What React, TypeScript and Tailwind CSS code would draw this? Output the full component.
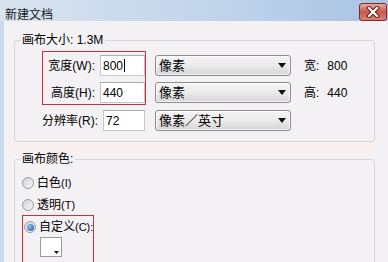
import React from "react";

const Combo = ({ text }: { text: string }) => (
  <div className="w-[136px] h-[21px] flex items-center justify-between rounded-[3px] border border-[#8c8c8c] bg-gradient-to-b from-[#f4f4f4] via-[#ebebeb] to-[#d4d4d4] pl-[3px] pr-[4px] shadow-[inset_0_0_0_1px_rgba(255,255,255,0.7)]">
    <span className="text-[13px] leading-[14px]">{text}</span>
    <svg width="8" height="5" viewBox="0 0 8 5">
      <path d="M0 0 L8 0 L4 5 Z" fill="#111" />
    </svg>
  </div>
);

const Field = ({ value, caret }: { value: string; caret?: boolean }) => (
  <div className="w-[45px] h-[21px] flex items-center bg-white border border-[#c3c6cb] border-t-[#a9acb1] pl-[2px] text-[12px]">
    <span>{value}</span>
    {caret && <span className="w-px h-[13px] bg-black ml-px" />}
  </div>
);

const Radio = ({ checked }: { checked?: boolean }) => (
  <div className="w-[12px] h-[12px] rounded-full border border-[#9a9c9e] bg-gradient-to-br from-[#cfd1d3] to-[#fafafa] flex items-center justify-center shrink-0">
    {checked && (
      <div className="w-[7px] h-[7px] rounded-full bg-[radial-gradient(circle_at_35%_35%,#8fc4f2,#1d4f93)]" />
    )}
  </div>
);

export default function App() {
  return (
    <div className="w-[388px] h-[262px] overflow-hidden flex flex-col bg-[#f4f1f4] text-black font-['Liberation_Sans','Noto_Sans_CJK_SC',sans-serif] text-[12px]">
      <div className="h-[2px] bg-[#1c1c1c]" />
      <div className="h-[24px] flex items-start justify-between pl-[5px] pr-[1px] bg-gradient-to-r from-[#d8e3ef] via-[#c4d6eb] to-[#a9c3e4]">
        <span className="mt-[9px] leading-[12px] text-[12px] text-[#1a1a1a]">新建文档</span>
        <div className="mt-[3px] w-[28px] h-[18px] rounded-[3px] border border-[#7d2b24] bg-gradient-to-b from-[#eaa99f] via-[#c9574a] to-[#d98577] flex items-center justify-center">
          <svg width="14" height="12" viewBox="0 0 14 12">
            <path d="M3 2 L11 10 M11 2 L3 10" stroke="#5e1d17" strokeWidth="4.2" strokeLinecap="square" />
            <path d="M3 2 L11 10 M11 2 L3 10" stroke="#ffffff" strokeWidth="2.2" strokeLinecap="square" />
          </svg>
        </div>
      </div>
      <div className="h-[2px] bg-[#eef2f7]" />
      <div className="flex-1 flex">
        <div className="w-[4px] bg-[#cbdaec]" />
        <div className="flex-1 flex flex-col pl-[10px] pr-[13px]">
          <fieldset className="mt-[13px] border border-[#d3d6db] rounded-[3px] pb-[10px]">
            <legend className="ml-[5px] px-[2px] leading-[12px]">画布大小: 1.3M</legend>
            <div className="flex mt-[5px] ml-[27px]">
              <div className="w-[104px] border border-[#c4333d] pt-[3px] pb-px flex flex-col gap-[6px]">
                <div className="h-[21px] flex items-center justify-end gap-[5px]">
                  <span>宽度(W):</span>
                  <Field value="800" caret />
                </div>
                <div className="h-[21px] flex items-center justify-end gap-[5px]">
                  <span>高度(H):</span>
                  <Field value="440" />
                </div>
              </div>
              <div className="ml-[9px] pt-[4px] flex flex-col gap-[6px]">
                <Combo text="像素" />
                <Combo text="像素" />
              </div>
              <div className="ml-[13px] pt-[4px] flex flex-col gap-[6px]">
                <div className="h-[21px] flex items-center gap-[8px]">
                  <span>宽:</span>
                  <span>800</span>
                </div>
                <div className="h-[21px] flex items-center gap-[8px]">
                  <span>高:</span>
                  <span>440</span>
                </div>
              </div>
            </div>
            <div className="flex mt-[5px] ml-[27px]">
              <div className="w-[104px] pr-px h-[21px] flex items-center justify-end gap-[5px] whitespace-nowrap">
                <span>分辨率(R):</span>
                <Field value="72" />
              </div>
              <div className="ml-[9px]">
                <Combo text="像素／英寸" />
              </div>
            </div>
          </fieldset>
          <div className="h-[11px] -ml-[10px] bg-[#f8efee]" />
          <fieldset className="border border-[#d3d6db] rounded-[3px] flex-1">
            <legend className="ml-[5px] px-[2px] leading-[12px]">画布颜色:</legend>
            <div className="mt-[10px] flex flex-col gap-[6px]">
              <div className="ml-[7px] h-[16px] flex items-center gap-[3px]">
                <Radio />
                <span>白色<span className="text-[11px]">(I)</span></span>
              </div>
              <div className="ml-[7px] h-[16px] flex items-center gap-[3px]">
                <Radio />
                <span>透明<span className="text-[11px]">(T)</span></span>
              </div>
            </div>
            <div className="ml-[7px] mt-[2px] w-[72px] border border-[#c4333d] pt-[3px] pb-[10px] pl-px">
              <div className="h-[16px] flex items-center gap-[3px] whitespace-nowrap">
                <Radio checked />
                <span className="text-[12px]">自定义<span className="text-[11px]">(C):</span></span>
              </div>
              <div className="ml-[16px] mt-[2px] w-[22px] h-[20px] bg-white border border-[#9a9a9a] flex items-end justify-end p-[2px]">
                <svg width="5" height="3" viewBox="0 0 5 3">
                  <path d="M0 0 L5 0 L2.5 3 Z" fill="#111" />
                </svg>
              </div>
            </div>
          </fieldset>
        </div>
      </div>
    </div>
  );
}
